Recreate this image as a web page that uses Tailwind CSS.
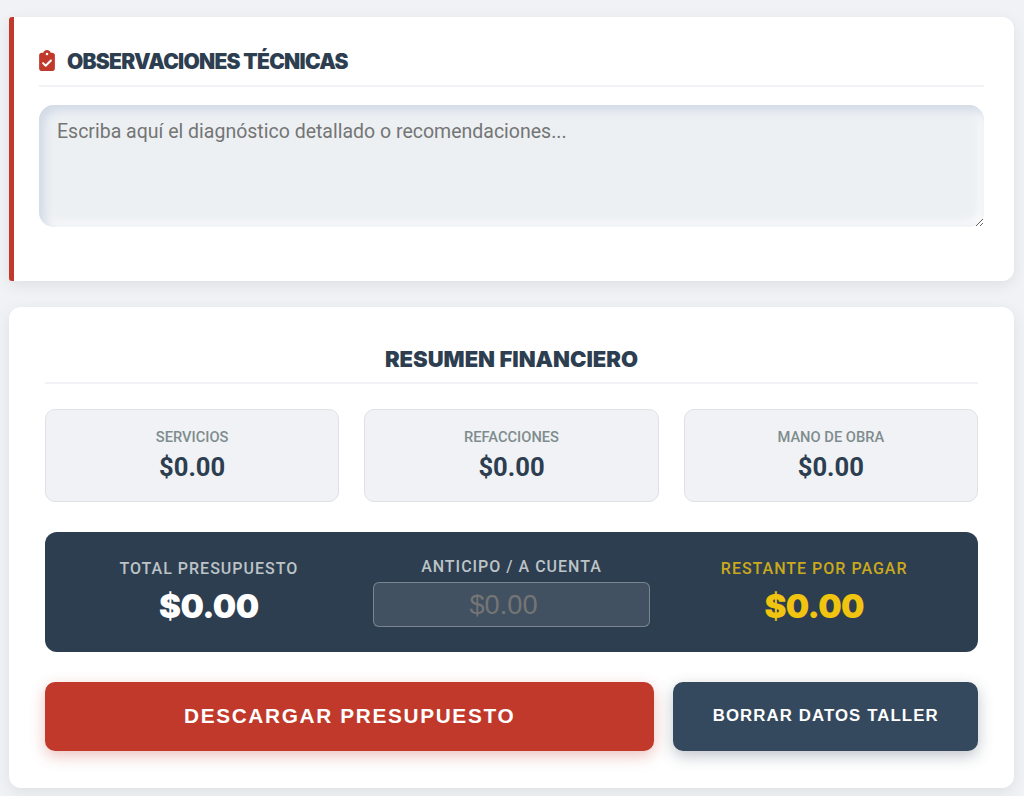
<!DOCTYPE html>
<html lang="es">
<head>
  <meta charset="UTF-8" />
  <meta name="viewport" content="width=device-width, initial-scale=1.0" />
  <title>Presupuesto Taller</title>
  <script src="https://cdn.jsdelivr.net/npm/@tailwindcss/browser@4"></script>
</head>
<body class="bg-[#f0f2f5] font-['Roboto',sans-serif] overflow-hidden">
  <main class="pt-[17px] pb-2 pl-[9px] pr-[10px] flex flex-col gap-[26px]">

    <!-- observaciones -->
    <section class="bg-white rounded-r-xl rounded-l-[3px] border-l-[5px] border-[#c0392b] shadow-[0_4px_15px_rgba(0,0,0,0.08)] pt-[25px] pr-[30px] pb-[54px] pl-[25px] h-[264px]">
      <h2 class="flex items-center gap-3 h-[45px] pb-[5px] border-b-2 border-[#f0f2f5] font-['Inter',sans-serif] font-black text-[21px] leading-none text-[#2c3e50] tracking-[-0.73px] mb-[18px]">
        <svg class="w-[16px] h-[21px] -mt-[2px] fill-[#c0392b]" viewBox="0 0 384 512"><path d="M192 0c-41.8 0-77.4 26.7-90.5 64H64C28.7 64 0 92.7 0 128V448c0 35.3 28.7 64 64 64H320c35.3 0 64-28.7 64-64V128c0-35.3-28.7-64-64-64H282.5C269.4 26.7 233.8 0 192 0zm0 64a32 32 0 1 1 0 64 32 32 0 1 1 0-64zM305 273L177 401c-9.4 9.4-24.6 9.4-33.9 0L79 337c-9.4-9.4-9.4-24.6 0-33.9s24.6-9.4 33.9 0l47 47L271 239c9.4-9.4 24.6-9.4 33.9 0s9.4 24.6 0 33.9z"/></svg>
        OBSERVACIONES TÉCNICAS
      </h2>
      <textarea class="block w-full h-[122px] rounded-[15px] bg-[#ecf0f3] px-[18px] pt-[15px] pb-[13px] text-[19.5px] leading-[24px] placeholder:text-[#757575] shadow-[inset_5px_5px_10px_#d1d9e6,inset_-5px_-5px_10px_#f9f9f9] outline-none" placeholder="Escriba aquí el diagnóstico detallado o recomendaciones..."></textarea>
    </section>

    <!-- resumen -->
    <section class="bg-white rounded-xl shadow-[0_4px_15px_rgba(0,0,0,0.08)] pt-[30px] px-9 pb-[37px] h-[481px]">
      <h2 class="h-[47px] flex items-center justify-center border-b-2 border-[#f0f2f5] pb-[1px] font-['Inter',sans-serif] font-black text-[22px] leading-none text-[#2c3e50] mb-[25px]">RESUMEN FINANCIERO</h2>

      <div class="grid grid-cols-3 gap-[25px] mb-[30px]">
        <div class="h-[93px] rounded-[10px] bg-[#f0f2f5] border border-[#dfe1e6] flex flex-col items-center pt-[17px]">
          <span class="text-[14.7px] leading-[20px] font-medium text-[#7f8c8d]">SERVICIOS</span>
          <span class="text-[25.6px] leading-[40px] font-bold text-[#2c3e50]">$0.00</span>
        </div>
        <div class="h-[93px] rounded-[10px] bg-[#f0f2f5] border border-[#dfe1e6] flex flex-col items-center pt-[17px]">
          <span class="text-[14.7px] leading-[20px] font-medium text-[#7f8c8d]">REFACCIONES</span>
          <span class="text-[25.6px] leading-[40px] font-bold text-[#2c3e50]">$0.00</span>
        </div>
        <div class="h-[93px] rounded-[10px] bg-[#f0f2f5] border border-[#dfe1e6] flex flex-col items-center pt-[17px]">
          <span class="text-[14.7px] leading-[20px] font-medium text-[#7f8c8d]">MANO DE OBRA</span>
          <span class="text-[25.6px] leading-[40px] font-bold text-[#2c3e50]">$0.00</span>
        </div>
      </div>

      <div class="h-[120px] rounded-xl bg-[#2c3e50] px-[25px] grid grid-cols-3 gap-[25px] items-center mb-[30px]">
        <div class="flex flex-col items-center pt-[6px]">
          <span class="text-[16px] leading-[22px] font-medium tracking-[1px] text-[#bdc3c7]">TOTAL PRESUPUESTO</span>
          <span class="font-['Inter',sans-serif] font-black text-[33px] tracking-[-0.6px] leading-[52px] text-white">$0.00</span>
        </div>
        <div class="flex flex-col items-center pb-[2px]">
          <span class="text-[16px] leading-[22px] font-medium tracking-[1px] text-[#bdc3c7] mb-[4px]">ANTICIPO / A CUENTA</span>
          <input class="w-full h-[45px] rounded-md bg-white/10 border border-white/30 pr-4 pt-[2px] text-center text-[27.2px] font-['Liberation_Sans',sans-serif] placeholder:text-[#757575] outline-none" placeholder="$0.00" />
        </div>
        <div class="flex flex-col items-center pt-[6px]">
          <span class="text-[16px] leading-[22px] font-medium tracking-[1px] text-[#caa91c]">RESTANTE POR PAGAR</span>
          <span class="font-['Inter',sans-serif] font-black text-[33px] tracking-[-0.6px] leading-[52px] text-[#f1c40f]">$0.00</span>
        </div>
      </div>

      <div class="grid grid-cols-[2fr_1fr] gap-[19.2px]">
        <button class="h-[69px] rounded-[10px] pb-[2px] bg-[#c0392b] text-white font-['Liberation_Sans',sans-serif] font-bold text-[20.8px] tracking-[1.65px] shadow-[0_5px_15px_rgba(192,57,43,0.3)]">DESCARGAR PRESUPUESTO</button>
        <button class="h-[69px] rounded-[10px] pb-[2px] bg-[#34495e] text-white font-['Liberation_Sans',sans-serif] font-bold text-[16.8px] tracking-[1.1px] shadow-[0_5px_15px_rgba(44,62,80,0.3)]">BORRAR DATOS TALLER</button>
      </div>
    </section>
  </main>
</body>
</html>
